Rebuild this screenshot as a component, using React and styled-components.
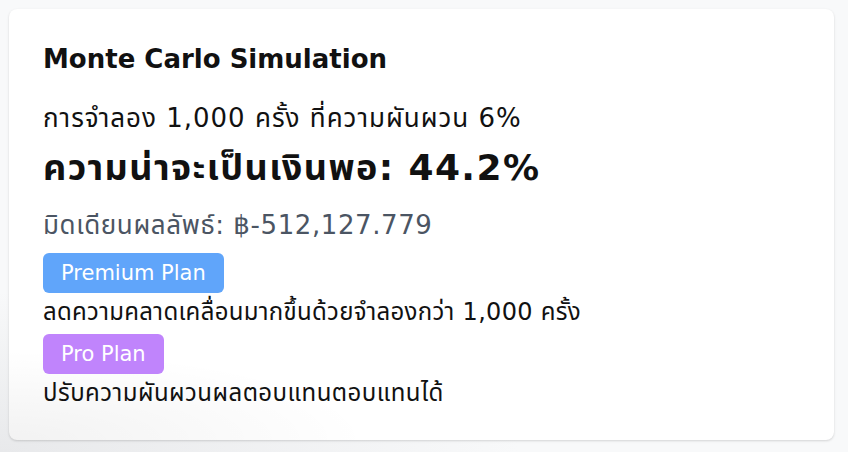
import React from 'react';
import styled, { createGlobalStyle } from 'styled-components';

const GlobalStyle = createGlobalStyle`
  html, body {
    margin: 0;
    padding: 0;
  }
  body {
    background: radial-gradient(ellipse 520px 160px at 0% 100%, #e8e9eb, #f8f9fa 100%);
    background-color: #f8f9fa;
    min-height: 452px;
    font-family: "DejaVu Sans", "Noto Sans Thai", "Noto Sans", sans-serif;
    color: #111111;
  }
`;

const Page = styled.div`
  padding: 9px 14px 11px 9px;
`;

const Card = styled.section`
  background: radial-gradient(ellipse 360px 90px at 0% 100%, rgba(0, 0, 0, 0.05), rgba(0, 0, 0, 0) 100%),
    #ffffff;
  border-radius: 8px;
  box-shadow: 0 1px 3px rgba(0, 0, 0, 0.1), 0 1px 2px rgba(0, 0, 0, 0.06);
  padding: 32px 32px 32px 34px;
`;

const Title = styled.h2`
  margin: 0 0 25px;
  font-size: 26px;
  line-height: 36px;
  font-weight: 700;
`;

const Subtitle = styled.p`
  margin: 0 0 12px;
  font-size: 26px;
  line-height: 32px;
  letter-spacing: 1px;
`;

const Probability = styled.p`
  margin: 0 0 19px;
  font-size: 36px;
  line-height: 44px;
  font-weight: 700;
  letter-spacing: 1.4px;
`;

const Median = styled.p`
  margin: 0 0 12px;
  font-size: 26px;
  line-height: 32px;
  letter-spacing: 0.6px;
  color: #4b5563;
`;

const Plan = styled.div`
  display: flex;
  flex-direction: column;
  align-items: flex-start;
  gap: 4px;

  & + & {
    margin-top: 7px;
  }
`;

const Badge = styled.span`
  display: flex;
  align-items: center;
  height: 40px;
  padding: 0 18px;
  border-radius: 6px;
  background: ${p => p.$color};
  color: #ffffff;
  font-size: 21px;
`;

const PlanNote = styled.p`
  margin: 0;
  font-size: 24px;
  line-height: 30px;
  letter-spacing: ${p => p.$spacing};
`;

const plans = [
  {
    name: 'Premium Plan',
    color: '#60a5fa',
    spacing: '0.3px',
    note: 'ลดความคลาดเคลื่อนมากขึ้นด้วยจำลองกว่า 1,000 ครั้ง',
  },
  {
    name: 'Pro Plan',
    color: '#c084fc',
    spacing: '0.45px',
    note: 'ปรับความผันผวนผลตอบแทนตอบแทนได้',
  },
];

const App = () => (
  <>
    <GlobalStyle />
    <Page>
      <Card>
        <Title>Monte Carlo Simulation</Title>
        <Subtitle>การจำลอง 1,000 ครั้ง ที่ความผันผวน 6%</Subtitle>
        <Probability>ความน่าจะเป็นเงินพอ: 44.2%</Probability>
        <Median>มิดเดียนผลลัพธ์: ฿-512,127.779</Median>
        {plans.map(plan => (
          <Plan key={plan.name}>
            <Badge $color={plan.color}>{plan.name}</Badge>
            <PlanNote $spacing={plan.spacing}>{plan.note}</PlanNote>
          </Plan>
        ))}
      </Card>
    </Page>
  </>
);

export default App;
